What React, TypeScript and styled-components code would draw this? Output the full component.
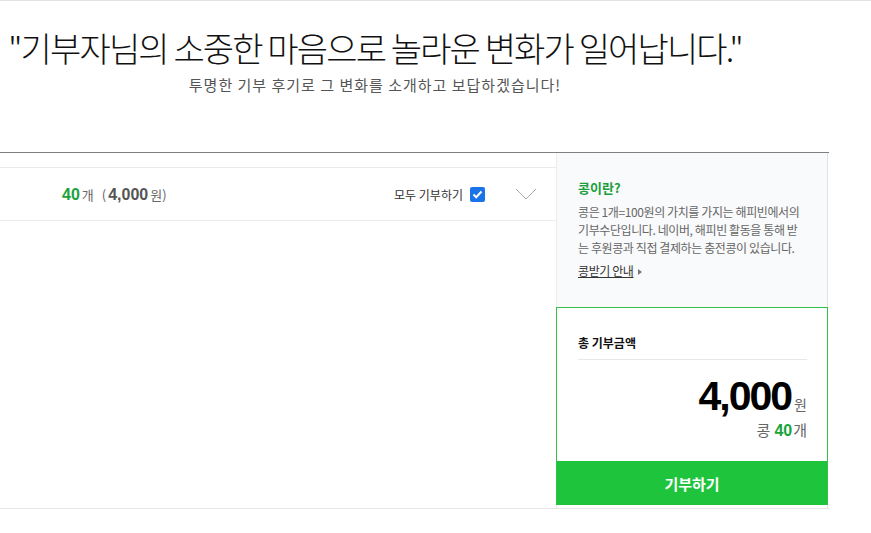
import React from 'react'
import styled, { createGlobalStyle } from 'styled-components'

const GlobalStyle = createGlobalStyle`
  html, body {
    margin: 0;
    padding: 0;
    background: #fff;
  }
  body {
    font-family: 'Noto Sans CJK KR', 'Noto Sans', sans-serif;
    color: #333;
  }
`

const Page = styled.div`
  width: 871px;
  min-height: 533px;
  border-top: 1px solid #e2e2e2;
  box-sizing: border-box;
`

const Hero = styled.div`
  width: 750px;
  padding-top: 26px;
  height: 151px;
  box-sizing: border-box;
  text-align: center;
`

const Title = styled.h2`
  margin: 0;
  font-size: 34px;
  line-height: 42px;
  font-weight: 300;
  letter-spacing: -1.85px;
  color: #111;
  white-space: nowrap;
`

const Subtitle = styled.p`
  margin: 6px 0 0;
  font-size: 15px;
  line-height: 20px;
  color: #555;
  letter-spacing: 1px;
`

const Board = styled.div`
  width: 829px;
  display: flex;
  border-top: 1px solid #7f7f7f;
  border-bottom: 1px solid #e6e6e6;
`

const LeftPane = styled.div`
  width: 557px;
  padding-top: 14px;
  box-sizing: border-box;
  border-right: 1px solid #ececec;
`

const SummaryRow = styled.div`
  height: 52px;
  display: flex;
  align-items: center;
  border-top: 1px solid #ebebeb;
  border-bottom: 1px solid #ebebeb;
  padding-left: 62px;
  padding-right: 19px;
`

const Amount = styled.div`
  flex: 1;
  font-size: 13px;
  color: #666;
  display: flex;
  align-items: baseline;
`

const Num = styled.b<{ $green?: boolean }>`
  font-family: 'Liberation Sans', Arial, sans-serif;
  font-size: 16px;
  font-weight: 700;
  color: ${p => (p.$green ? '#1aa33b' : '#555')};
  margin-right: 2px;
`

const Paren = styled.span`
  margin: 0 2px 0 8px;
`

const AllToggle = styled.label`
  display: flex;
  align-items: center;
  gap: 7px;
  font-size: 12px;
  color: #333;
  margin-right: 30px;
`

const Check = styled.span`
  width: 15px;
  height: 15px;
  border-radius: 2px;
  background: #1a73e8;
  display: inline-flex;
  align-items: center;
  justify-content: center;
`

const Chevron = styled.svg`
  width: 22px;
  height: 12px;
`

const RightPane = styled.div`
  width: 271px;
  display: flex;
  flex-direction: column;
`

const Info = styled.div`
  height: 154px;
  box-sizing: border-box;
  background: #f9fafb;
  border-right: 1px solid #e2e2e2;
  padding: 25px 20px 0 21px;
`

const InfoTitle = styled.h4`
  margin: 0 0 5px;
  font-size: 13px;
  line-height: 20px;
  font-weight: 700;
  color: #1c9e3c;
`

const InfoText = styled.p`
  margin: 0;
  font-size: 12px;
  line-height: 18px;
  color: #666;
  letter-spacing: -0.4px;
`

const InfoLink = styled.a`
  display: inline-block;
  margin-top: 5px;
  font-size: 12px;
  line-height: 18px;
  color: #333;
  text-decoration: underline;
  letter-spacing: -0.4px;
  &::after {
    content: '';
    display: inline-block;
    margin-left: 4px;
    border-left: 4px solid #777;
    border-top: 3px solid transparent;
    border-bottom: 3px solid transparent;
    vertical-align: 1px;
  }
`

const TotalBox = styled.div`
  margin-left: -1px;
  width: 272px;
  height: 198px;
  box-sizing: border-box;
  border: 1px solid #35bf48;
  border-bottom: none;
  display: flex;
  flex-direction: column;
`

const TotalBody = styled.div`
  flex: 1;
  padding: 24px 20px 0 21px;
`

const TotalLabel = styled.div`
  font-size: 12px;
  line-height: 22px;
  font-weight: 700;
  color: #111;
  padding-bottom: 5px;
  border-bottom: 1px solid #e8e8e8;
`

const BigSum = styled.div`
  display: flex;
  justify-content: flex-end;
  align-items: baseline;
  margin-top: 16px;
  line-height: 40px;
`

const BigNum = styled.span`
  font-family: 'Liberation Sans', Arial, sans-serif;
  font-size: 41px;
  font-weight: 700;
  letter-spacing: -2px;
  color: #000;
`

const Unit = styled.span`
  font-size: 14px;
  color: #666;
  margin-left: 3px;
`

const BeanCount = styled.div`
  text-align: right;
  font-size: 15px;
  line-height: 20px;
  color: #666;
  margin-top: -4px;
`

const BeanNum = styled.b`
  font-family: 'Liberation Sans', Arial, sans-serif;
  font-size: 16px;
  color: #1aa33b;
  margin: 0 1px 0 4px;
`

const DonateButton = styled.button`
  height: 44px;
  border: none;
  margin: 0;
  background: #1ec43c;
  color: #fff;
  font-family: inherit;
  font-size: 15px;
  font-weight: 700;
  cursor: pointer;
`

const Tail = styled.div`
  height: 3px;
  border-right: 1px solid #e2e2e2;
`

export default function App() {
  return (
    <>
      <GlobalStyle />
      <Page>
        <Hero>
          <Title>"기부자님의 소중한 마음으로 놀라운 변화가 일어납니다."</Title>
          <Subtitle>투명한 기부 후기로 그 변화를 소개하고 보답하겠습니다!</Subtitle>
        </Hero>
        <Board>
          <LeftPane>
            <SummaryRow>
              <Amount>
                <Num $green>40</Num>개
                <Paren>(</Paren>
                <Num>4,000</Num>원)
              </Amount>
              <AllToggle>
                모두 기부하기
                <Check>
                  <svg width="11" height="9" viewBox="0 0 11 9">
                    <path d="M1.5 4.5 L4.2 7.2 L9.5 1.5" fill="none" stroke="#fff" strokeWidth="2" />
                  </svg>
                </Check>
              </AllToggle>
              <Chevron viewBox="0 0 22 12">
                <path d="M1 1 L11 11 L21 1" fill="none" stroke="#aaa" strokeWidth="1" />
              </Chevron>
            </SummaryRow>
          </LeftPane>
          <RightPane>
            <Info>
              <InfoTitle>콩이란?</InfoTitle>
              <InfoText>
                콩은 1개=100원의 가치를 가지는 해피빈에서의 기부수단입니다. 네이버, 해피빈 활동을 통해 받는 후원콩과 직접 결제하는 충전콩이 있습니다.
              </InfoText>
              <InfoLink>콩받기 안내</InfoLink>
            </Info>
            <TotalBox>
              <TotalBody>
                <TotalLabel>총 기부금액</TotalLabel>
                <BigSum>
                  <BigNum>4,000</BigNum>
                  <Unit>원</Unit>
                </BigSum>
                <BeanCount>
                  콩<BeanNum>40</BeanNum>개
                </BeanCount>
              </TotalBody>
              <DonateButton>기부하기</DonateButton>
            </TotalBox>
            <Tail />
          </RightPane>
        </Board>
      </Page>
    </>
  )
}
